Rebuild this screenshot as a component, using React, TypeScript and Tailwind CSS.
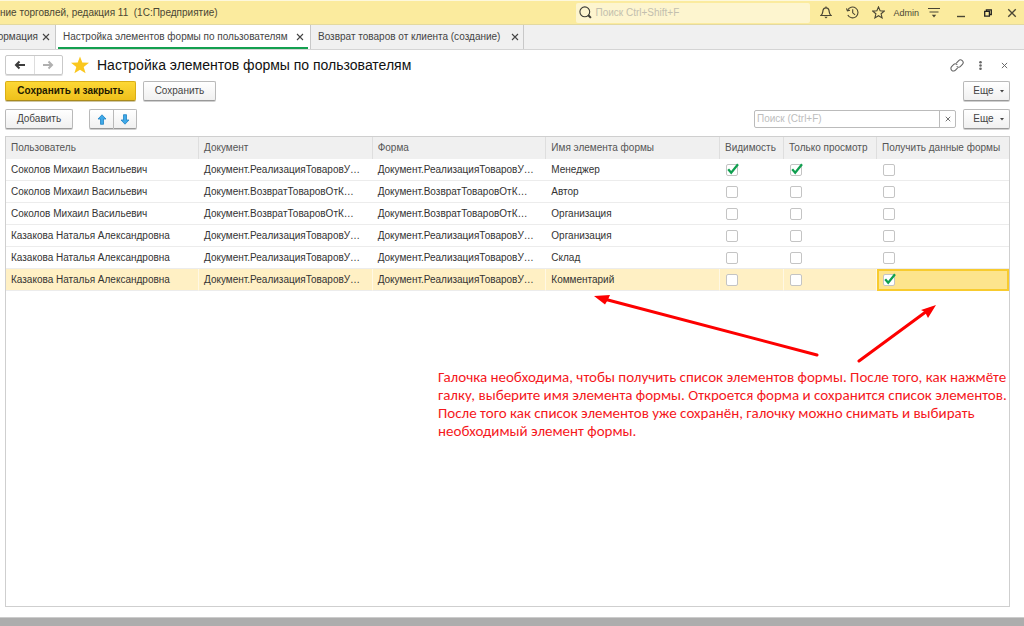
import React from "react";
import clsx from "clsx";

const columns = [
  { title: "Пользователь", width: "w-[193px]" },
  { title: "Документ", width: "" },
  { title: "Форма", width: "" },
  { title: "Имя элемента формы", width: "" },
  { title: "Видимость", width: "w-[64px]" },
  { title: "Только просмотр", width: "w-[93px]" },
  { title: "Получить данные формы", width: "w-[132px]" },
];

const SALE = "Документ.РеализацияТоваровУ…";
const REFUND = "Документ.ВозвратТоваровОтК…";
const SOKOLOV = "Соколов Михаил Васильевич";
const KAZAKOVA = "Казакова Наталья Александровна";

const rows = [
  { user: SOKOLOV, doc: SALE, element: "Менеджер", flags: [true, true, false] },
  { user: SOKOLOV, doc: REFUND, element: "Автор", flags: [false, false, false] },
  { user: SOKOLOV, doc: REFUND, element: "Организация", flags: [false, false, false] },
  { user: KAZAKOVA, doc: SALE, element: "Организация", flags: [false, false, false] },
  { user: KAZAKOVA, doc: SALE, element: "Склад", flags: [false, false, false] },
  { user: KAZAKOVA, doc: SALE, element: "Комментарий", flags: [false, false, true] },
];

const buttonStyle =
  "flex h-5 items-center justify-center rounded-xs border border-[#b9b9b9] border-b-[#999] bg-linear-to-b from-white to-[#f0f0f0] text-[#444] shadow-[0_1px_0_#cfcfcf]";

const Cross = ({ size = 8 }: { size?: number }) => (
  <svg width={size} height={size} viewBox="0 0 8 8" fill="none" stroke="currentColor" strokeWidth="1.1">
    <path d="M1 1l6 6M7 1L1 7" />
  </svg>
);

const Arrow = ({ className }: { className?: string }) => (
  <svg className={className} width="12" height="10" viewBox="0 0 12 10" fill="none" stroke="currentColor" strokeWidth="2">
    <path d="M11 5H2M5.5 1.500L2 5l3.500 3.500" />
  </svg>
);

const BlueArrow = ({ className }: { className?: string }) => (
  <svg className={className} width="10" height="11" viewBox="0 0 10 11">
    <path d="M5 .8L9 5H6.5v5.3h-3V5H1z" fill="#3fa9e8" stroke="#1f83c4" strokeWidth=".8" strokeLinejoin="round" />
  </svg>
);

const TitleBar = () => (
  <header className="flex h-[25px] items-center border-t border-b border-t-[#fdf8dc] border-b-[#e3d9a0] bg-[#fbeb9e] text-[#4a4634]">
    <span className="flex-1 truncate">ние торговлей, редакция 11&nbsp; (1С:Предприятие)</span>
    <label className="flex h-5 w-[234px] items-center gap-[3px] rounded-xs bg-[#fdf5cf] pl-[3px]">
      <svg width="13" height="13" viewBox="0 0 13 13" fill="none" stroke="#3b3b35" strokeWidth="1.1">
        <circle cx="5.8" cy="5.8" r="4.9" />
        <path d="M9.3 9.3l2.6 2.6" strokeWidth="2" />
      </svg>
      <input
        aria-label="Поиск"
        placeholder="Поиск Ctrl+Shift+F"
        className="min-w-0 flex-1 bg-transparent outline-none placeholder:text-[#c3bfae]"
      />
    </label>
    <div className="flex items-center pl-[2px]">
      <button aria-label="Уведомления" className="flex w-[27px] justify-center">
        <svg width="12" height="13" viewBox="0 0 12 13" fill="none" stroke="currentColor" strokeWidth="1.2">
          <path d="M1 9.5C2.8 8 2.6 6.6 3 4.4 3.3 2.8 4.4 1.8 6 1.8s2.7 1 3 2.6c.4 2.2.2 3.6 2 5.1z" />
          <path d="M6 .4v1.4" />
          <path d="M4.3 10.7h3.4L6 12.4z" fill="currentColor" stroke="none" />
        </svg>
      </button>
      <button aria-label="История" className="flex w-[26px] justify-center">
        <svg width="13" height="13" viewBox="0 0 13 13" fill="none" stroke="currentColor" strokeWidth="1.1">
          <path d="M1.6 4.4a5.4 5.4 0 1 1 .2 4.6" />
          <path d="M.5 2.4l.9 2.5 2.6-.7M6.7 3.3v3.5l2.4 2" />
        </svg>
      </button>
      <button aria-label="Избранное" className="flex w-[26px] justify-center">
        <svg width="13" height="13" viewBox="0 0 13 13" fill="none" stroke="currentColor" strokeWidth="1.1">
          <path d="M6.500.9l1.600 3.900 4.100.3-3.100 2.700 1 4.100-3.600-2.200-3.600 2.200 1-4.100L.8 5.100l4.100-.3z" />
        </svg>
      </button>
      <span className="px-[2px] text-[9px]">Admin</span>
      <button aria-label="Меню" className="flex w-[26px] justify-center">
        <svg width="12" height="11" viewBox="0 0 12 11" fill="none" stroke="currentColor" strokeWidth="1.2">
          <path d="M0 1.5h12M1.5 5h9" />
          <path d="M3.8 7.8h4.4L6 10.4z" fill="currentColor" stroke="none" />
        </svg>
      </button>
      <button aria-label="Свернуть" className="flex w-[28px] justify-center">
        <svg width="8" height="10" viewBox="0 0 8 10" stroke="currentColor" strokeWidth="1.4">
          <path d="M0 8.5h8" />
        </svg>
      </button>
      <button aria-label="Восстановить" className="flex w-[25px] justify-center">
        <svg width="8" height="8" viewBox="0 0 8 8" fill="none" stroke="#222" strokeWidth="1.3">
          <path d="M.7 2.4h4.7v4.7H.7zM2.4 2.4V.8h4.9v4.7H5.4" />
        </svg>
      </button>
      <button aria-label="Закрыть" className="flex w-6 justify-center">
        <Cross size={10} />
      </button>
    </div>
  </header>
);

const Tabs = () => (
  <nav className="flex h-[25px] border-b border-[#d4d4d4] bg-[#f0f0f0] whitespace-nowrap text-[#444]">
    <div className="flex w-[56px] items-center justify-end gap-1 overflow-hidden border-r border-[#c8c8c8] pr-[5px]">
      <a href="#information">ормация</a>
      <button aria-label="Закрыть вкладку"><Cross /></button>
    </div>
    <div className="flex w-[254px] bg-white px-[2px]">
      <div className="flex flex-1 items-center justify-between border-b-2 border-[#14a050] pt-[2px] pr-1 pl-[5px]">
        <a href="#settings">Настройка элементов формы по пользователям</a>
        <button aria-label="Закрыть вкладку"><Cross /></button>
      </div>
    </div>
    <div className="flex w-[214px] items-center justify-between border-x border-[#c8c8c8] pr-1 pl-[7px]">
      <a href="#refund">Возврат товаров от клиента (создание)</a>
      <button aria-label="Закрыть вкладку"><Cross /></button>
    </div>
  </nav>
);

const MoreButton = () => (
  <button className={clsx(buttonStyle, "w-[47px] gap-[6px] pl-1")}>
    Еще
    <svg width="4" height="3" viewBox="0 0 4 3"><path d="M0 0h4L2 2.5z" fill="#444" /></svg>
  </button>
);

const Toolbar = () => (
  <div className="flex flex-col pt-[5px] pr-[14px] pl-[5px]">
    <div className="flex h-5 items-center">
      <div className="flex h-5 w-[58px] rounded-xs border border-[#c9c9c9] shadow-[0_1px_0_#ddd]">
        <button aria-label="Назад" className="flex flex-1 items-center justify-center border-r border-[#ddd] text-[#3c3c3c]">
          <Arrow />
        </button>
        <button aria-label="Вперед" className="flex flex-1 items-center justify-center text-[#b0b0b0]">
          <Arrow className="rotate-180" />
        </button>
      </div>
      <svg className="mx-2" width="18" height="18" viewBox="0 0 19 18">
        <path d="M9.5 0l2.4 6.4 7.1.3-5.6 4.3 2 6.8-5.9-3.9-5.9 3.9 2-6.8L0 6.7l7.1-.3z" fill="#fac71e" />
      </svg>
      <h1 className="flex-1 text-[14px] text-[#111]">Настройка элементов формы по пользователям</h1>
      <div className="flex items-center gap-3 text-[#666]">
        <button aria-label="Получить ссылку">
          <svg width="14" height="13" viewBox="0 0 14 13" fill="none" stroke="currentColor" strokeWidth="1.1" strokeLinecap="round">
            <path d="M6.600 3.800l1.900-2a2.600 2.600 0 0 1 3.900 3.600L10.200 7.700c-.9.800-2.300.7-3.100-.2" />
            <path d="M7.400 9.200l-1.900 2a2.600 2.600 0 0 1-3.900-3.600L3.800 5.300c.9-.8 2.300-.7 3.100.2" />
          </svg>
        </button>
        <button aria-label="Еще действия" className="pr-[7px] pl-[3px]">
          <svg width="3" height="9" viewBox="0 0 3 9" fill="currentColor">
            <circle cx="1.5" cy="1.3" r="1.3" /><circle cx="1.5" cy="4.5" r="1.3" /><circle cx="1.5" cy="7.7" r="1.3" />
          </svg>
        </button>
        <button aria-label="Закрыть форму" className="pr-[2px]"><Cross size={7} /></button>
      </div>
    </div>
    <div className="mt-[6px] flex justify-between">
      <div className="flex gap-[7px]">
        <button className="h-5 w-[131px] rounded-xs border border-[#d9ae16] border-b-[#a98a1c] bg-linear-to-b from-[#fdd835] to-[#eec01a] font-bold text-[#1f1a00] shadow-[0_1px_0_#cfc7a8]">
          Сохранить и закрыть
        </button>
        <button className={clsx(buttonStyle, "w-[73px]")}>Сохранить</button>
      </div>
      <MoreButton />
    </div>
    <div className="mt-2 flex justify-between">
      <div className="flex gap-4">
        <button className={clsx(buttonStyle, "w-[68px]")}>Добавить</button>
        <div className="flex">
          <button aria-label="Переместить вверх" className={clsx(buttonStyle, "w-6 rounded-r-none border-r-0")}>
            <BlueArrow />
          </button>
          <button aria-label="Переместить вниз" className={clsx(buttonStyle, "w-6 rounded-l-none")}>
            <BlueArrow className="rotate-180" />
          </button>
        </div>
      </div>
      <div className="flex items-center gap-[7px]">
        <div className="flex h-[18px] w-[202px] rounded-xs border border-[#bbb] bg-white">
          <input
            aria-label="Поиск по списку"
            placeholder="Поиск (Ctrl+F)"
            className="min-w-0 flex-1 px-[2px] outline-none placeholder:text-[#bdbdbd]"
          />
          <button aria-label="Очистить" className="flex w-4 items-center justify-center border-l border-[#bbb] text-[#555]">
            <Cross size={6} />
          </button>
        </div>
        <MoreButton />
      </div>
    </div>
  </div>
);

const Flag = ({ checked, label }: { checked: boolean; label: string }) => (
  <label className="relative block size-3">
    <input
      type="checkbox"
      aria-label={label}
      defaultChecked={checked}
      className="peer block size-3 appearance-none rounded-xs border border-[#c4c4c4] bg-white"
    />
    <svg
      className="absolute bottom-[1px] left-[1px] hidden peer-checked:block"
      width="12" height="12" viewBox="0 0 12 12" fill="none" stroke="#0f9f4f" strokeWidth="2.2"
    >
      <path d="M1.2 6.2l3 3.6L11 1.2" />
    </svg>
  </label>
);

const ElementsTable = () => (
  <table className="w-full table-fixed border-separate border-spacing-0 text-left whitespace-nowrap">
    <thead>
      <tr className="h-[22px] bg-[#f0f0f0] text-[#555]">
        {columns.map(({ title, width }) => (
          <th key={title} className={clsx(width, "border-r border-[#dedede] p-0 pl-[5px] font-normal last:border-r-0")}>
            {title}
          </th>
        ))}
      </tr>
    </thead>
    <tbody className="text-[#333]">
      {rows.map(({ user, doc, element, flags }, index) => {
        const selected = index === rows.length - 1;
        const cell = clsx(
          "border-b border-b-[#ececec] p-0 pl-[5px]",
          selected && "border-r border-r-[#fff8e4]"
        );
        return (
          <tr key={index} className={clsx("h-[22px]", selected && "bg-[#fff0c4]")}>
            {[user, doc, doc, element].map((text, i) => (
              <td key={i} className={cell}>{text}</td>
            ))}
            {flags.map((flag, i) => (
              <td
                key={i}
                className={
                  selected && i === 2
                    ? "border-2 border-[#f8cb2e] bg-[#fde48c] p-0 pl-1"
                    : clsx(cell, "pl-[6px]")
                }
              >
                <Flag checked={flag} label={columns[i + 4].title} />
              </td>
            ))}
          </tr>
        );
      })}
    </tbody>
  </table>
);

// Callout drawn over the empty part of the list
const Callout = () => (
  <div className="absolute top-[156px] right-0 w-[571px] text-[#f5181c]">
    <svg className="block" width="571" height="75" viewBox="0 0 571 75" fill="#fd0000">
      <path d="M379 62L168 6.500M421 68l68-50" stroke="#fd0000" strokeWidth="3" strokeLinecap="round" />
      <path d="M156 3l16-1-2 4.500-3 5zM498 12l-15 5 4 2 3 6z" />
    </svg>
    <p className="font-['Carlito','Lato','Noto_Sans',sans-serif] text-[15px] leading-[18px] whitespace-nowrap">
      Галочка необходима, чтобы получить список элементов формы. После того, как нажмёте
      <br />
      галку, выберите имя элемента формы. Откроется форма и сохранится список элементов.
      <br />
      После того как список элементов уже сохранён, галочку можно снимать и выбирать
      <br />
      необходимый элемент формы.
    </p>
  </div>
);

const App = () => {
  return (
    <div className="flex min-h-screen flex-col bg-white font-['Liberation_Sans',Arial,sans-serif] text-[10px] leading-[14px]">
      <TitleBar />
      <Tabs />
      <Toolbar />
      <main className="relative mt-[7px] mr-[14px] mb-[10px] ml-[5px] flex-1 border border-[#cfcfcf]">
        <ElementsTable />
        <Callout />
      </main>
      <footer className="h-[9px] border-t border-[#ccc] bg-[#adadad]" />
    </div>
  );
};

export default App;
